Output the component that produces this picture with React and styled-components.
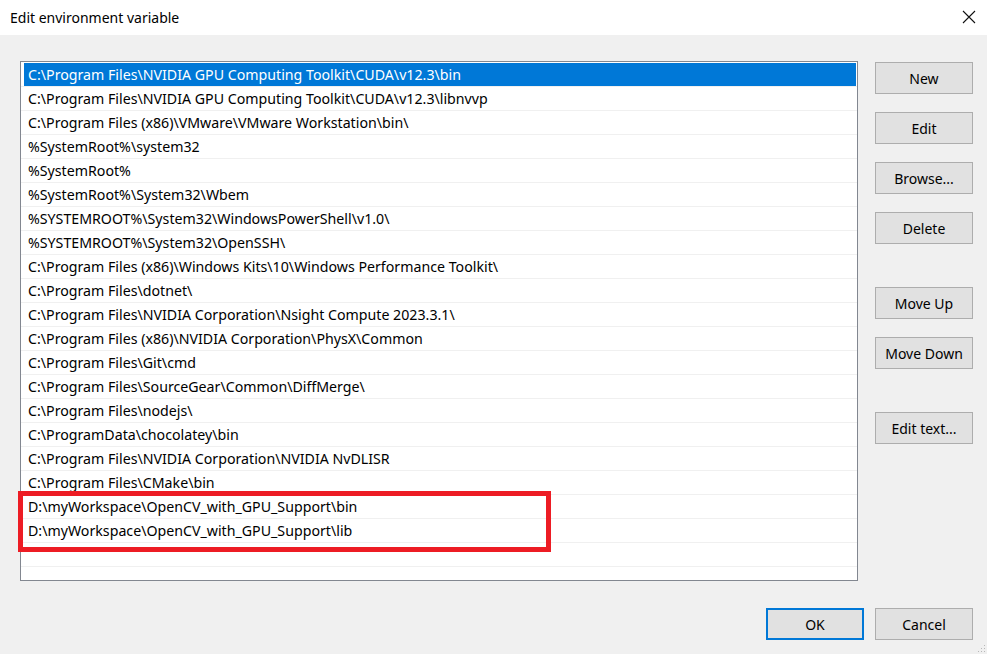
import React from "react";
import styled, { createGlobalStyle } from "styled-components";

const GlobalStyle = createGlobalStyle`
  html, body { margin: 0; padding: 0; background: #f0f0f0; }
  body { font-family: "Noto Sans", "Liberation Sans", sans-serif; color: #000; }
  * { box-sizing: border-box; }
`;

const Window = styled.div`
  position: relative;
  width: 987px;
  height: 654px;
  background: #f0f0f0;
  display: flex;
  flex-direction: column;
  overflow: hidden;
`;

const TitleBar = styled.div`
  height: 35px;
  background: #fff;
  display: flex;
  align-items: center;
  justify-content: space-between;
  padding: 0 11px 0 10px;
  font-size: 14px;
`;

const TitleText = styled.span`
  margin-top: -1px;
`;

const CloseBtn = styled.svg`
  width: 14px;
  height: 14px;
  margin-top: -1px;
`;

const Body = styled.div`
  display: flex;
  padding: 26px 14px 0 20px;
`;

const ListBox = styled.div`
  position: relative;
  width: 838px;
  height: 520px;
  border: 1px solid #828790;
  background: #fff;
  padding-top: 1px;
  font-size: 14.2px;
`;

const Row = styled.div`
  height: 24px;
  border-bottom: 1px solid #f0f0f0;
  display: flex;
`;

const Label = styled.div`
  flex: 1;
  margin: 0 1px 0 3px;
  padding: 1px 0 0 4px;
  line-height: 22px;
  white-space: nowrap;
  background: ${(p) => (p.$selected ? "#0078d7" : "transparent")};
  color: ${(p) => (p.$selected ? "#fff" : "#000")};
`;

const Highlight = styled.div`
  position: absolute;
  left: -3px;
  top: 429px;
  width: 533px;
  height: 61px;
  border: 5px solid #ed1c24;
  pointer-events: none;
`;

const Side = styled.div`
  display: flex;
  flex-direction: column;
  margin-left: 17px;
  margin-top: 1px;
`;

const Button = styled.button`
  width: 98px;
  height: 32px;
  margin-top: ${(p) => p.$gap ?? 0}px;
  background: #e1e1e1;
  border: ${(p) => (p.$default ? "2px solid #0078d7" : "1px solid #adadad")};
  font-family: inherit;
  font-size: 14px;
  color: #000;
  padding: 0;
`;

const Footer = styled.div`
  display: flex;
  justify-content: flex-end;
  gap: 11px;
  padding: 27px 14px 0 0;
`;

const Grip = styled.svg`
  position: absolute;
  right: 1px;
  bottom: 1px;
  width: 8px;
  height: 8px;
`;

const paths = [
  "C:\\Program Files\\NVIDIA GPU Computing Toolkit\\CUDA\\v12.3\\bin",
  "C:\\Program Files\\NVIDIA GPU Computing Toolkit\\CUDA\\v12.3\\libnvvp",
  "C:\\Program Files (x86)\\VMware\\VMware Workstation\\bin\\",
  "%SystemRoot%\\system32",
  "%SystemRoot%",
  "%SystemRoot%\\System32\\Wbem",
  "%SYSTEMROOT%\\System32\\WindowsPowerShell\\v1.0\\",
  "%SYSTEMROOT%\\System32\\OpenSSH\\",
  "C:\\Program Files (x86)\\Windows Kits\\10\\Windows Performance Toolkit\\",
  "C:\\Program Files\\dotnet\\",
  "C:\\Program Files\\NVIDIA Corporation\\Nsight Compute 2023.3.1\\",
  "C:\\Program Files (x86)\\NVIDIA Corporation\\PhysX\\Common",
  "C:\\Program Files\\Git\\cmd",
  "C:\\Program Files\\SourceGear\\Common\\DiffMerge\\",
  "C:\\Program Files\\nodejs\\",
  "C:\\ProgramData\\chocolatey\\bin",
  "C:\\Program Files\\NVIDIA Corporation\\NVIDIA NvDLISR",
  "C:\\Program Files\\CMake\\bin",
  "D:\\myWorkspace\\OpenCV_with_GPU_Support\\bin",
  "D:\\myWorkspace\\OpenCV_with_GPU_Support\\lib",
  "",
];

const buttons = [
  { label: "New", gap: 0 },
  { label: "Edit", gap: 18 },
  { label: "Browse...", gap: 18 },
  { label: "Delete", gap: 18 },
  { label: "Move Up", gap: 43 },
  { label: "Move Down", gap: 18 },
  { label: "Edit text...", gap: 43 },
];

export default function App() {
  return (
    <>
      <GlobalStyle />
      <Window>
        <TitleBar>
          <TitleText>Edit environment variable</TitleText>
          <CloseBtn viewBox="0 0 14 14">
            <path d="M1 1 L13 13 M13 1 L1 13" stroke="#111" strokeWidth="1.1" fill="none" />
          </CloseBtn>
        </TitleBar>
        <Body>
          <ListBox>
            {paths.map((p, i) => (
              <Row key={i}>
                <Label $selected={i === 0}>{p}</Label>
              </Row>
            ))}
            <Highlight />
          </ListBox>
          <Side>
            {buttons.map((b) => (
              <Button key={b.label} $gap={b.gap}>
                {b.label}
              </Button>
            ))}
          </Side>
        </Body>
        <Footer>
          <Button $default>OK</Button>
          <Button>Cancel</Button>
        </Footer>
        <Grip viewBox="0 0 8 8">
          <rect x="6" y="0" width="1" height="1" fill="#b8b8b8" />
          <rect x="3" y="3" width="1" height="1" fill="#b8b8b8" />
          <rect x="6" y="3" width="1" height="1" fill="#b8b8b8" />
          <rect x="0" y="6" width="1" height="1" fill="#b8b8b8" />
          <rect x="3" y="6" width="1" height="1" fill="#b8b8b8" />
          <rect x="6" y="6" width="1" height="1" fill="#b8b8b8" />
        </Grip>
      </Window>
    </>
  );
}
